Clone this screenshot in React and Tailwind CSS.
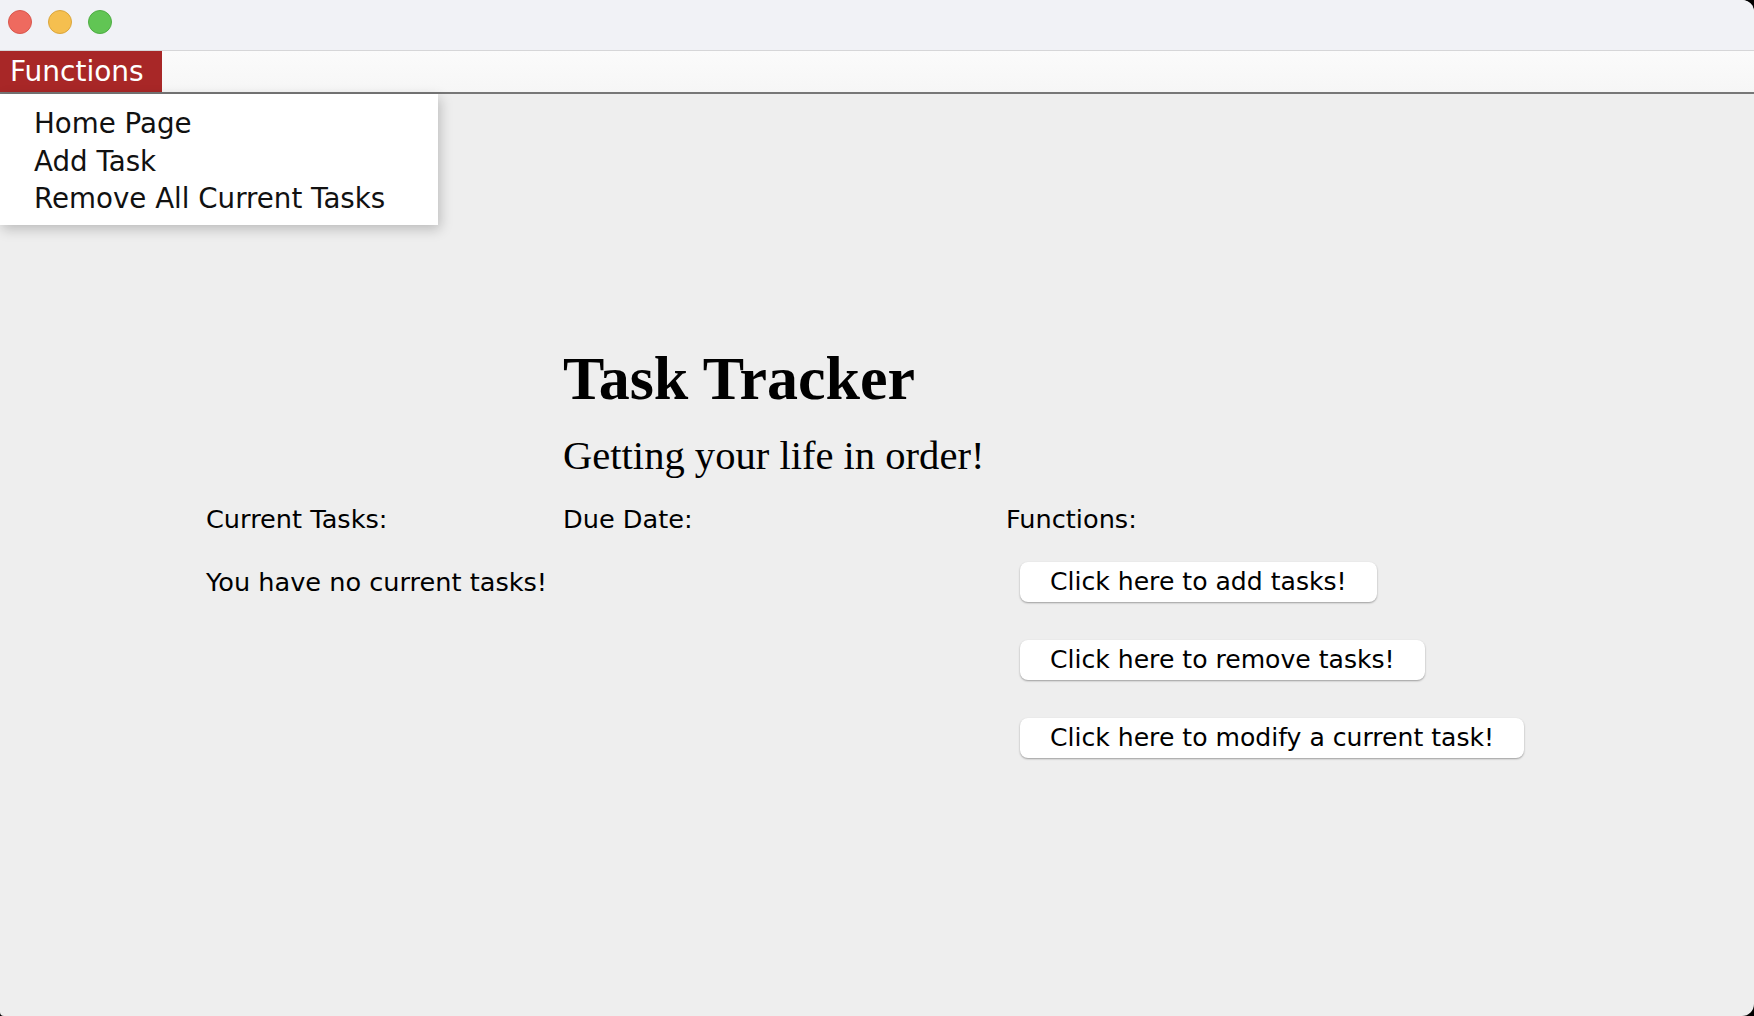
import React from "react";

const sans = "font-['DejaVu_Sans',sans-serif]";
const serif = "font-['Liberation_Serif','Times_New_Roman',serif]";

const menuItems = ["Home Page", "Add Task", "Remove All Current Tasks"];
const actions = [
  "Click here to add tasks!",
  "Click here to remove tasks!",
  "Click here to modify a current task!",
];

const TrafficLights = () => (
  <div className="flex items-center gap-[16px] pl-[8px] pt-[10px]">
    <span className="w-[24px] h-[24px] rounded-full bg-[#ee6a5f] border border-[#d9574d]" />
    <span className="w-[24px] h-[24px] rounded-full bg-[#f5bf4f] border border-[#dba63c]" />
    <span className="w-[24px] h-[24px] rounded-full bg-[#61c554] border border-[#4ead43]" />
  </div>
);

export default function App() {
  return (
    <div className="w-[1754px] h-[1016px] bg-black overflow-hidden">
      <div className="w-full h-full flex flex-col bg-[#eeeeee] rounded-tr-[12px] rounded-br-[12px] rounded-bl-[4px] overflow-hidden">
        {/* title bar */}
        <div className="h-[51px] shrink-0 bg-[#f1f2f6] border-b border-[#d6d6d8]">
          <TrafficLights />
        </div>

        {/* menu bar */}
        <div className="h-[43px] shrink-0 bg-gradient-to-b from-[#fbfbfb] to-[#f6f6f6] border-b-2 border-[#777777] flex">
          <div className={`${sans} h-[41px] w-[162px] bg-[#a82727] text-white text-[28px] leading-[41px] pl-[10px]`}>
            Functions
          </div>
        </div>

        {/* content */}
        <div className="relative flex-1">
          <div className="absolute left-0 top-0 w-[438px] h-[131px] bg-white shadow-[2px_4px_12px_rgba(0,0,0,0.22)] pt-[11px] pl-[34px] z-10">
            {menuItems.map((item) => (
              <div
                key={item}
                className={`${sans} text-[27.7px] leading-[37.5px] text-[#111]`}
              >
                {item}
              </div>
            ))}
          </div>

          <div className="pl-[206px] pt-[254px] text-black">
            <div className="ml-[357px]">
              <h1 className={`${serif} font-bold text-[62px] leading-[60px]`}>
                Task Tracker
              </h1>
              <p className={`${serif} text-[40.6px] leading-[40px] mt-[28px]`}>
                Getting your life in order!
              </p>
            </div>

            <div className={`${sans} flex text-[25.6px] leading-[30px] mt-[28px]`}>
              <div className="w-[357px]">
                <div>Current Tasks:</div>
                <div className="mt-[33px]">You have no current tasks!</div>
              </div>
              <div className="w-[443px]">
                <div>Due Date:</div>
              </div>
              <div className="flex flex-col items-start">
                <div>Functions:</div>
                <div className="ml-[14px] mt-[28px] flex flex-col items-start gap-[38px]">
                  {actions.map((label) => (
                    <button
                      key={label}
                      className="h-[40px] px-[30px] pt-[5px] pb-[5px] bg-white rounded-[8px] leading-[30px] text-[25.1px] text-black shadow-[0_1px_2px_rgba(0,0,0,0.35)] whitespace-nowrap"
                    >
                      {label}
                    </button>
                  ))}
                </div>
              </div>
            </div>
          </div>
        </div>
      </div>
    </div>
  );
}
